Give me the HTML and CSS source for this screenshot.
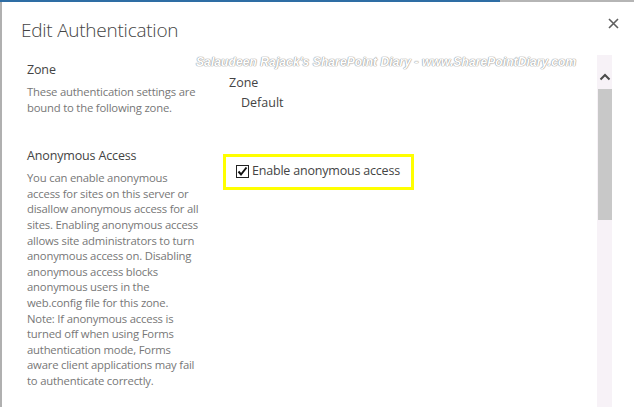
FILE: index.html
```html
<!DOCTYPE html>
<html>
<head>
<meta charset="utf-8">
<link rel="stylesheet" href="styles.css">
</head>
<body>
<div class="dialog">
  <div class="topbar"><span class="topbar-blue"></span><span class="topbar-gray"></span></div>
  <div class="frame">
    <header class="header">
      <h1 class="title">Edit Authentication</h1>
      <button class="close" aria-label="Close">
        <svg width="11" height="11" viewBox="0 0 11 11"><path d="M1 1 L10 10 M10 1 L1 10" stroke="#5f5f5f" stroke-width="1.6" fill="none"/></svg>
      </button>
    </header>
    <div class="watermark">Salaudeen Rajack's SharePoint Diary - www.SharePointDiary.com</div>
    <div class="body">
      <div class="content">
        <section class="row row-zone">
          <div class="left">
            <h2 class="label">Zone</h2>
            <p class="desc">These authentication settings are bound to the following zone.</p>
          </div>
          <div class="right">
            <div class="field-label">Zone</div>
            <div class="field-value">Default</div>
          </div>
        </section>
        <section class="row row-anon">
          <div class="left">
            <h2 class="label">Anonymous Access</h2>
            <p class="desc">You can enable anonymous access for sites on this server or disallow anonymous access for all sites. Enabling anonymous access allows site administrators to turn anonymous access on. Disabling anonymous access blocks anonymous users in the web.config file for this zone. <span class="note">Note: If anonymous access is turned off when using Forms authentication mode, Forms aware client applications may fail to authenticate correctly.</span></p>
          </div>
          <div class="right">
            <div class="highlight">
              <label class="check">
                <span class="box"><svg width="13" height="13" viewBox="0 0 13 13"><rect x="0.5" y="0.5" width="12" height="12" fill="#fff" stroke="#222"/><path d="M2.5 6.5 L5 9.5 L10.5 2.5" stroke="#111" stroke-width="2" fill="none"/></svg></span>
                <span class="check-text">Enable anonymous access</span>
              </label>
            </div>
          </div>
        </section>
      </div>
      <div class="scrollbar">
        <div class="scroll-up"><svg width="12" height="8" viewBox="0 0 12 8"><path d="M1.5 6.5 L6 2 L10.5 6.5" stroke="#4a4a4a" stroke-width="2" fill="none"/></svg></div>
        <div class="scroll-thumb"></div>
      </div>
    </div>
  </div>
</div>
</body>
</html>
```
FILE: styles.css
```css
html, body {
  margin: 0;
  padding: 0;
  background: #fff;
}
body {
  font-family: "Open Sans", "Noto Sans", "Liberation Sans", sans-serif;
  color: #444;
}
.dialog {
  position: relative;
  width: 634px;
  height: 407px;
  overflow: hidden;
  display: flex;
  flex-direction: column;
}
.topbar {
  display: flex;
  height: 2px;
  flex: none;
}
.topbar-blue {
  width: 500px;
  background: #2e6da4;
}
.topbar-gray {
  flex: 1;
  background: #b5b5b5;
}
.frame {
  flex: 1;
  display: flex;
  flex-direction: column;
  border-left: 2px solid #b0b0b0;
  min-height: 0;
}
.header {
  display: flex;
  justify-content: space-between;
  align-items: flex-start;
  padding: 13px 15px 0 19px;
  height: 40px;
  flex: none;
}
.title {
  margin: 0;
  font-size: 19px;
  font-weight: 300;
  line-height: 30px;
  color: #444;
  letter-spacing: -0.25px;
}
.close {
  border: 0;
  background: none;
  padding: 0;
  margin-top: 3px;
  width: 11px;
  height: 11px;
  display: block;
}
.close svg { display: block; }
.watermark {
  position: absolute;
  left: 196px;
  top: 55px;
  font-family: "Liberation Sans", sans-serif;
  font-size: 12px;
  font-weight: bold;
  font-style: italic;
  color: #fff;
  letter-spacing: 0.1px;
  text-shadow: 0 0 1px #999, 0 0 1px #999, 0 0 1px #aaa;
  white-space: nowrap;
}
.body {
  flex: 1;
  display: flex;
  min-height: 0;
}
.content {
  flex: 1;
  padding: 6px 0 0 25px;
}
.row {
  display: flex;
}
.left {
  width: 175px;
  flex: none;
}
.right {
  padding-left: 27px;
}
.label {
  margin: 0;
  font-size: 12.5px;
  font-weight: 400;
  line-height: 18px;
  color: #444;
  letter-spacing: -0.15px;
}
.desc {
  margin: 5px 0 0;
  font-size: 11.3px;
  line-height: 15.6px;
  color: #777;
  letter-spacing: -0.2px;
}
.note {
  display: block;
}
.row-zone .right {
  padding-top: 12px;
}
.field-label {
  font-size: 12.5px;
  line-height: 20px;
  color: #444;
}
.field-value {
  font-size: 12.5px;
  line-height: 20px;
  padding-left: 12px;
  color: #444;
}
.row-anon {
  margin-top: 32px;
}
.row-anon .right {
  padding-left: 21px;
  padding-top: 7px;
}
.highlight {
  border: 3px solid #ffff00;
  padding: 5px 10px 5px 10px;
  width: 165px;
  height: 20px;
}
.check {
  display: flex;
  align-items: center;
  gap: 3px;
  font-size: 12.5px;
  line-height: 18px;
  color: #444;
  white-space: nowrap;
  letter-spacing: -0.2px;
}
.box { display: block; height: 13px; }
.box svg { display: block; }
.scrollbar {
  width: 15px;
  margin: 0 22px 0 0;
  background: #f7f2f7;
  flex: none;
  display: flex;
  flex-direction: column;
}
.scroll-up {
  height: 34px;
  display: flex;
  align-items: center;
  justify-content: center;
  padding-top: 10px;
  box-sizing: border-box;
}
.scroll-up svg { display: block; }
.scroll-thumb {
  margin-left: 1px;
  width: 14px;
  height: 131px;
  background: #c8c8c8;
}
```
